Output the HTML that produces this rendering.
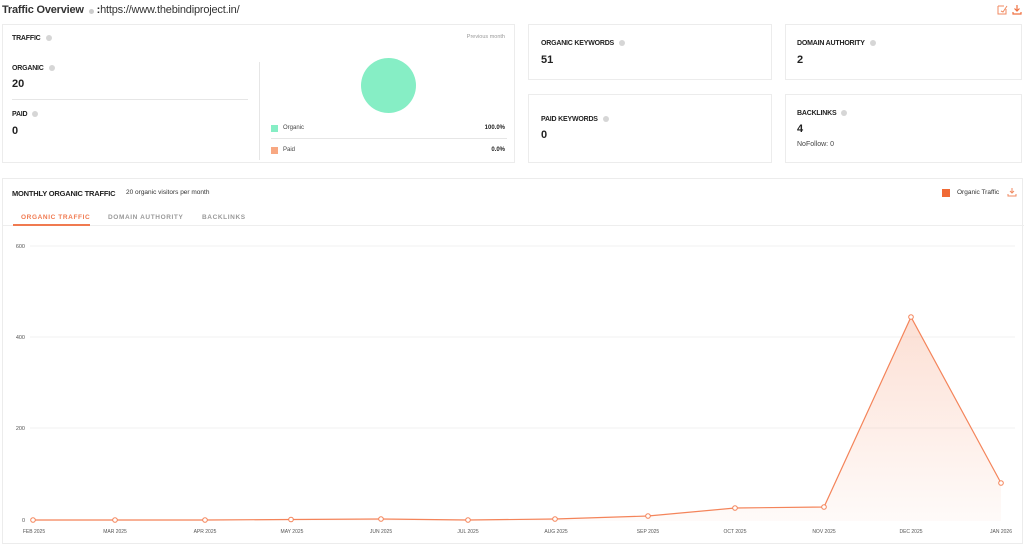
<!DOCTYPE html>
<html><head><style>
*{margin:0;padding:0;box-sizing:border-box}
body{width:1024px;height:545px;background:#fff;font-family:"Liberation Sans",sans-serif;color:#222;position:relative;overflow:hidden}
.a{position:absolute}
.card{position:absolute;border:1px solid #ececec;background:#fff}
.lb{font-size:7px;font-weight:bold;letter-spacing:-0.2px;color:#222}
.dot{display:inline-block;width:6px;height:6px;border-radius:50%;background:#d6d6d6;margin-left:5px;vertical-align:-1px}
.v{font-size:11px;font-weight:bold}
.sm{font-size:6px;color:#444}
</style></head><body>
<div class="a" style="left:2px;top:4px;font-size:11px;letter-spacing:-0.2px"><b style="color:#333">Traffic Overview</b><span class="dot" style="width:5px;height:5px;background:#ccc"></span> <b>:</b><span style="color:#333">https://www.thebindiproject.in/</span></div>
<svg class="a" style="left:996px;top:4px" width="26" height="11"><path d="M2 2h6M2 2v8h8V5M5 7l2 1 4-6" stroke="#f08a60" fill="none" stroke-width="1"/><path d="M21 1v6M18.5 4.5L21 7l2.5-2.5M17 8v2h8V8" stroke="#f07040" fill="none" stroke-width="1.2"/></svg>

<div class="card" style="left:2px;top:24px;width:513px;height:139px">
<div class="a lb" style="left:9px;top:10px">TRAFFIC<span class="dot"></span></div>
<div class="a sm" style="right:9px;top:9px;color:#999;font-size:5.5px">Previous month</div>
<div class="a lb" style="left:9px;top:40px">ORGANIC<span class="dot"></span></div>
<div class="a v" style="left:9px;top:53px">20</div>
<div class="a" style="left:9px;top:74px;width:236px;height:1px;background:#e6e6e6"></div>
<div class="a lb" style="left:9px;top:86px">PAID<span class="dot"></span></div>
<div class="a v" style="left:9px;top:100px">0</div>
<div class="a" style="left:256px;top:37px;width:1px;height:98px;background:#e6e6e6"></div>
<div class="a" style="left:358px;top:33px;width:55px;height:55px;border-radius:50%;background:#86eec5"></div>
<div class="a" style="left:268px;top:100px;width:7px;height:7px;background:#86eec5"></div>
<div class="a sm" style="left:280px;top:100px">Organic</div>
<div class="a sm" style="right:9px;top:100px;font-weight:bold;color:#222">100.0%</div>
<div class="a" style="left:268px;top:113px;width:236px;height:1px;background:#e6e6e6"></div>
<div class="a" style="left:268px;top:122px;width:7px;height:7px;background:#f8a882"></div>
<div class="a sm" style="left:280px;top:122px">Paid</div>
<div class="a sm" style="right:9px;top:122px;font-weight:bold;color:#222">0.0%</div>
</div>

<div class="card" style="left:528px;top:24px;width:244px;height:56px">
<div class="a lb" style="left:12px;top:15px">ORGANIC KEYWORDS<span class="dot"></span></div>
<div class="a v" style="left:12px;top:29px">51</div></div>
<div class="card" style="left:785px;top:24px;width:237px;height:56px">
<div class="a lb" style="left:11px;top:15px">DOMAIN AUTHORITY<span class="dot"></span></div>
<div class="a v" style="left:11px;top:29px">2</div></div>
<div class="card" style="left:528px;top:94px;width:244px;height:69px">
<div class="a lb" style="left:12px;top:21px">PAID KEYWORDS<span class="dot"></span></div>
<div class="a v" style="left:12px;top:34px">0</div></div>
<div class="card" style="left:785px;top:94px;width:237px;height:69px">
<div class="a lb" style="left:11px;top:15px">BACKLINKS<span class="dot"></span></div>
<div class="a v" style="left:11px;top:28px">4</div>
<div class="a sm" style="left:11px;top:46px;font-size:7px">NoFollow: 0</div></div>

<div class="card" style="left:2px;top:178px;width:1021px;height:366px">
<div class="a lb" style="left:9px;top:10px;font-size:7.5px">MONTHLY ORGANIC TRAFFIC</div>
<div class="a sm" style="left:123px;top:10px;font-size:6.5px;color:#333">20 organic visitors per month</div>
<div class="a" style="left:939px;top:10px;width:8px;height:8px;background:#f06a35"></div>
<div class="a sm" style="left:954px;top:10px;font-size:6.5px;color:#333">Organic Traffic</div>
<svg class="a" style="left:1004px;top:8px" width="10" height="10"><path d="M5 1v5M3 4l2 2 2-2M1 7v2h8V7" stroke="#f08a60" fill="none" stroke-width="1"/></svg>
<div class="a" style="left:18px;top:35px;font-size:6.5px;font-weight:bold;letter-spacing:0.6px;color:#f07a50">ORGANIC TRAFFIC</div>
<div class="a" style="left:105px;top:35px;font-size:6.5px;font-weight:bold;letter-spacing:0.6px;color:#999">DOMAIN AUTHORITY</div>
<div class="a" style="left:199px;top:35px;font-size:6.5px;font-weight:bold;letter-spacing:0.6px;color:#999">BACKLINKS</div>
<div class="a" style="left:0;top:46px;width:1021px;height:1px;background:#eee"></div>
<div class="a" style="left:10px;top:45px;width:77px;height:2px;background:#f07a50"></div>
</div>

<svg class="a" style="left:0;top:0" width="1024" height="545">
<defs><linearGradient id="g" x1="0" y1="0" x2="0" y2="1"><stop offset="0" stop-color="#f7a585" stop-opacity=".35"/><stop offset="1" stop-color="#f7a585" stop-opacity=".05"/></linearGradient></defs>
<g stroke="#f2f2f2" stroke-width="1"><line x1="30" y1="246" x2="1015" y2="246"/><line x1="30" y1="337" x2="1015" y2="337"/><line x1="30" y1="428" x2="1015" y2="428"/></g>
<g font-family="Liberation Sans" font-size="5.5" fill="#555" text-anchor="end"><text x="25" y="248">600</text><text x="25" y="339">400</text><text x="25" y="430">200</text><text x="25" y="522">0</text></g>
<path d="M33 520L115 520L205 520L291 519.5L381 519L468 520L555 519L648 516L735 508L824 507L911 317L1001 483L1001 521L33 521Z" fill="url(#g)"/>
<polyline points="33,520 115,520 205,520 291,519.5 381,519 468,520 555,519 648,516 735,508 824,507 911,317 1001,483" fill="none" stroke="#f4845a" stroke-width="1.2"/>
<g fill="#fff" stroke="#f4845a" stroke-width="1"><circle cx="33" cy="520" r="2.3"/><circle cx="115" cy="520" r="2.3"/><circle cx="205" cy="520" r="2.3"/><circle cx="291" cy="519.5" r="2.3"/><circle cx="381" cy="519" r="2.3"/><circle cx="468" cy="520" r="2.3"/><circle cx="555" cy="519" r="2.3"/><circle cx="648" cy="516" r="2.3"/><circle cx="735" cy="508" r="2.3"/><circle cx="824" cy="507" r="2.3"/><circle cx="911" cy="317" r="2.3"/><circle cx="1001" cy="483" r="2.3"/></g>
<g font-family="Liberation Sans" font-size="5" fill="#555" text-anchor="middle"><text x="34" y="533">FEB 2025</text><text x="115" y="533">MAR 2025</text><text x="205" y="533">APR 2025</text><text x="292" y="533">MAY 2025</text><text x="381" y="533">JUN 2025</text><text x="468" y="533">JUL 2025</text><text x="556" y="533">AUG 2025</text><text x="648" y="533">SEP 2025</text><text x="735" y="533">OCT 2025</text><text x="824" y="533">NOV 2025</text><text x="911" y="533">DEC 2025</text><text x="1001" y="533">JAN 2026</text></g>
</svg>
</body></html>
